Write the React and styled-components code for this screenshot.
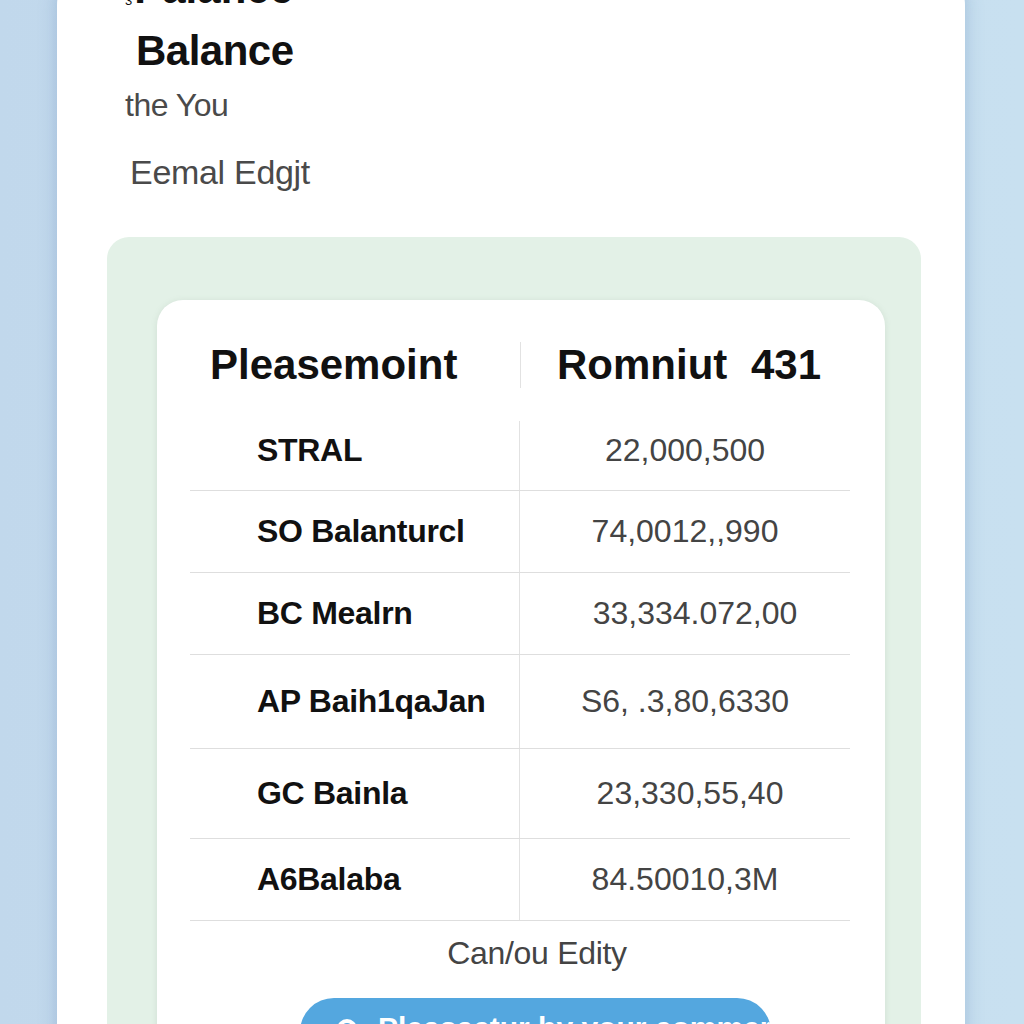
import React from 'react';
import styled, { createGlobalStyle } from 'styled-components';

const GlobalStyle = createGlobalStyle`
  html, body {
    margin: 0;
    padding: 0;
    background: linear-gradient(90deg, #c1d8ec 0%, #c6ddef 50%, #c8e0f0 100%);
    font-family: "Liberation Sans", Arial, sans-serif;
    overflow: hidden;
  }
  * { box-sizing: border-box; }
`;

const Page = styled.div`
  height: 1024px;
  padding: 0 59px 0 57px;
  overflow: hidden;
`;

const Card = styled.div`
  margin-top: -35px;
  background: #ffffff;
  border-radius: 40px;
  box-shadow: 0 0 18px rgba(90, 130, 175, 0.35);
  padding: 0 0 80px 0;
`;

const Line = styled.div`
  margin: ${(p) => p.top || 0}px 0 0 ${(p) => p.indent}px;
  height: ${(p) => p.lh}px;
  font-size: ${(p) => p.size}px;
  line-height: ${(p) => p.lh}px;
  font-weight: ${(p) => (p.bold ? 700 : 400)};
  color: ${(p) => (p.bold ? '#111' : '#4a4a4a')};
  letter-spacing: ${(p) => p.ls || 0}px;
  white-space: nowrap;

  sub {
    font-size: 13px;
    line-height: 0;
    font-weight: 400;
    vertical-align: -2px;
    margin-right: 2px;
  }
`;

const Panel = styled.div`
  margin: 45px 44px 0 50px;
  background: #e3f1e7;
  border-radius: 22px;
  padding: 63px 36px 0 50px;
`;

const Inner = styled.div`
  background: #ffffff;
  border-radius: 26px;
  box-shadow: 0 1px 6px rgba(120, 150, 130, 0.18);
  padding: 0 35px 60px 33px;
`;

const Header = styled.div`
  display: grid;
  grid-template-columns: 1fr 1fr;
  padding: 42px 0 23px 0;
  font-size: 42px;
  line-height: 46px;
  font-weight: 700;
  color: #111;
`;

const HeadCell = styled.div`
  padding-left: ${(p) => (p.right ? 36 : 20)}px;
  border-left: ${(p) => (p.right ? '1px solid #e2e2e2' : 'none')};
  word-spacing: ${(p) => (p.right ? 12 : 0)}px;
  white-space: nowrap;
`;

const Row = styled.div`
  display: grid;
  grid-template-columns: 1fr 1fr;
  height: ${(p) => p.h}px;
  border-bottom: 1.5px solid #dedede;
`;

const NameCell = styled.div`
  display: flex;
  align-items: center;
  padding-left: 67px;
  border-right: 1.5px solid #e2e2e2;
  margin-top: ${(p) => (p.first ? 10 : 0)}px;
  padding-bottom: ${(p) => (p.first ? 10 : 0)}px;
  font-size: 32px;
  font-weight: 700;
  color: #111;
  white-space: nowrap;
  letter-spacing: -0.3px;
`;

const ValueCell = styled.div`
  display: flex;
  align-items: center;
  justify-content: center;
  font-size: 32px;
  color: #444;
  white-space: nowrap;
  padding-left: ${(p) => p.shift || 0}px;
`;

const Footer = styled.div`
  margin-top: 12px;
  padding-left: 34px;
  text-align: center;
  font-size: 32px;
  line-height: 40px;
  color: #444;
  letter-spacing: -0.3px;
`;

const Button = styled.button`
  display: flex;
  align-items: flex-start;
  gap: 20px;
  margin: 25px 0 0 110px;
  width: 471px;
  height: 80px;
  border: none;
  border-radius: 34px;
  background: #54a7df;
  color: #ffffff;
  font-family: "Liberation Sans", Arial, sans-serif;
  font-size: 30px;
  line-height: 36px;
  font-weight: 700;
  padding: 12px 0 0 36px;
  white-space: nowrap;
  overflow: hidden;

  svg {
    margin-top: 8px;
    flex-shrink: 0;
  }
`;

const rows = [
  { name: 'STRAL', value: '22,000,500', h: 80, shift: -20 },
  { name: 'SO Balanturcl', value: '74,0012,,990', h: 82 },
  { name: 'BC Mealrn', value: '33,334.072,00', h: 82, shift: 20 },
  { name: 'AP Baih1qaJan', value: 'S6, .3,80,6330', h: 94 },
  { name: 'GC Bainla', value: '23,330,55,40', h: 90, shift: 10 },
  { name: 'A6Balaba', value: '84.50010,3M', h: 82 },
];

function App() {
  return (
    <>
      <GlobalStyle />
      <Page>
        <Card>
          <Line indent={68} size={42} lh={48} bold>
            <sub>3</sub>Palance
          </Line>
          <Line indent={79} size={42} lh={48} top={14} bold ls={-0.5}>
            Balance
          </Line>
          <Line indent={68} size={32} lh={40} top={10} ls={-0.5}>
            the You
          </Line>
          <Line indent={73} size={34} lh={40} top={27} ls={-0.3}>
            Eemal Edgjt
          </Line>
          <Panel>
            <Inner>
              <Header>
                <HeadCell>Pleasemoint</HeadCell>
                <HeadCell right>Romniut 431</HeadCell>
              </Header>
              {rows.map((r, i) => (
                <Row key={r.name} h={r.h}>
                  <NameCell first={i === 0}>{r.name}</NameCell>
                  <ValueCell shift={r.shift}>{r.value}</ValueCell>
                </Row>
              ))}
              <Footer>Can/ou Edity</Footer>
              <Button type="button">
                <svg width="22" height="22" viewBox="0 0 22 22">
                  <circle cx="11" cy="11" r="8" fill="none" stroke="#fff" strokeWidth="4" />
                </svg>
                Pleasactur by your commercial any
              </Button>
            </Inner>
          </Panel>
        </Card>
      </Page>
    </>
  );
}

export default App;
